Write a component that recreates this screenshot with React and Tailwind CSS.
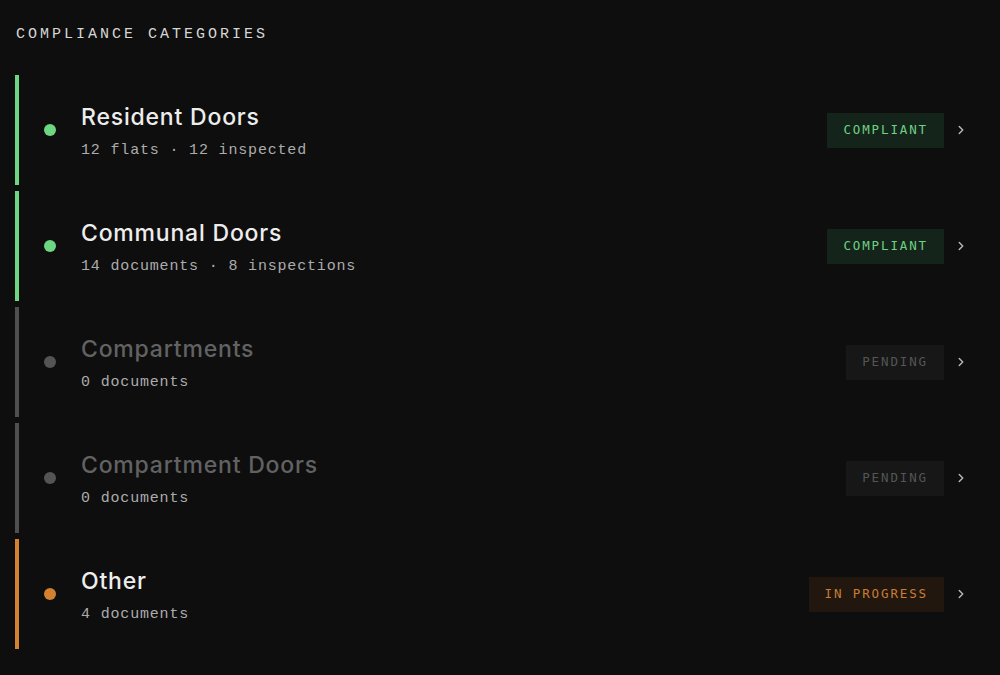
import { ChevronRight } from "lucide-react";

const categories = [
  { name: "Resident Doors", meta: "12 flats · 12 inspected", status: "compliant" },
  { name: "Communal Doors", meta: "14 documents · 8 inspections", status: "compliant" },
  { name: "Compartments", meta: "0 documents", status: "pending" },
  { name: "Compartment Doors", meta: "0 documents", status: "pending" },
  { name: "Other", meta: "4 documents", status: "progress" },
];

// per-status colours for the side bar, dot, title and badge
const tones = {
  compliant: {
    bar: "bg-[#6dd683]",
    dot: "bg-[#6dd683]",
    title: "text-[#ededed]",
    badge: "bg-[#15241a] text-[#6fd184]",
    label: "COMPLIANT",
  },
  pending: {
    bar: "bg-[#4f4f4f]",
    dot: "bg-[#545454]",
    title: "text-[#626262]",
    badge: "bg-[#171717] text-[#555555]",
    label: "PENDING",
  },
  progress: {
    bar: "bg-[#d3812f]",
    dot: "bg-[#d3812f]",
    title: "text-[#ededed]",
    badge: "bg-[#21170f] text-[#c97d34]",
    label: "IN PROGRESS",
  },
};

const mono = "font-['Liberation_Mono','DejaVu_Sans_Mono',monospace]";
const badgeMono = "font-['DejaVu_Sans_Mono','Liberation_Mono',monospace]";

const CategoryRow = ({ name, meta, status }) => {
  const t = tones[status];
  return (
    <div className="flex h-[110px] items-center">
      <div className={`h-full w-[4px] ${t.bar}`} />
      <div className={`ml-[25px] h-[12px] w-[12px] rounded-full ${t.dot}`} />
      <div className="ml-[25px] flex flex-col pt-[4px]">
        <div className={`text-[23px] font-medium leading-[28px] tracking-[0.035em] ${t.title}`}>{name}</div>
        <div className={`mt-[10px] text-[15px] leading-[20px] tracking-[0.055em] text-[#acacac] ${mono}`}>{meta}</div>
      </div>
      <div className="ml-auto flex items-center">
        <div className={`flex h-[35px] items-center px-4 text-[12.5px] tracking-[0.15em] ${badgeMono} ${t.badge}`}>
          {t.label}
        </div>
        <ChevronRight size={14} strokeWidth={2.5} className="ml-[10px] text-[#b5b5b5]" />
      </div>
    </div>
  );
};

const App = () => {
  return (
    <div className="min-h-screen w-full bg-[#0e0e0e] pl-[15px] pr-[32px] pt-[25px] font-['Inter','Noto_Sans',sans-serif]">
      <h2 className={`pl-[1px] text-[15px] leading-[20px] tracking-[0.2em] text-[#d6d6d6] ${mono}`}>
        COMPLIANCE CATEGORIES
      </h2>
      <div className="mt-[30px] flex flex-col gap-[6px]">
        {categories.map((c) => (
          <CategoryRow key={c.name} {...c} />
        ))}
      </div>
    </div>
  );
};

export default App;
